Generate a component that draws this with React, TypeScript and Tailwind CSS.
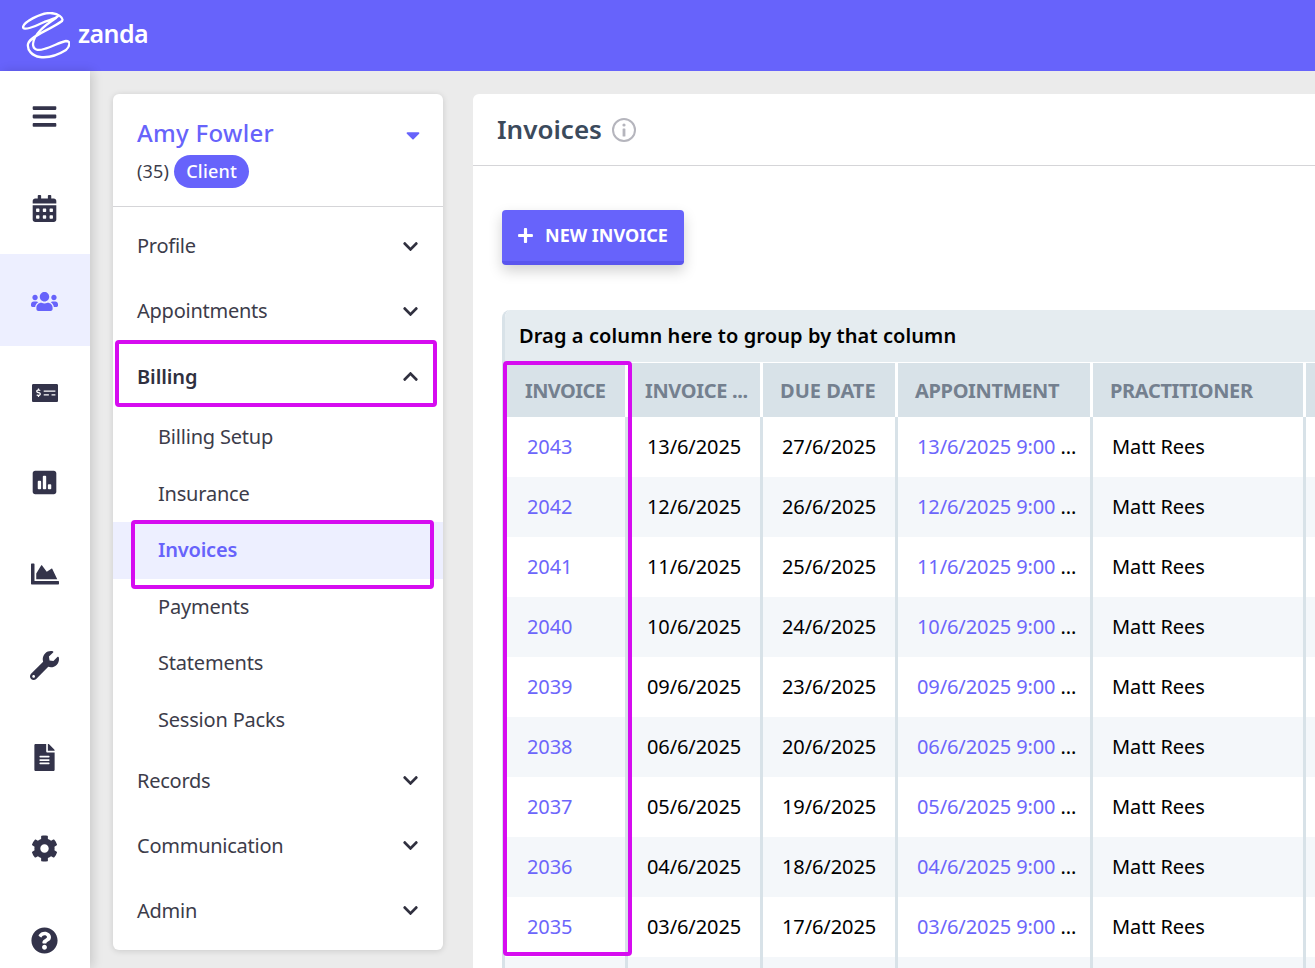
import React from 'react';
import {
  FaBars,
  FaCalendarAlt,
  FaCaretDown,
  FaChartArea,
  FaChevronDown,
  FaChevronUp,
  FaCog,
  FaFileAlt,
  FaMoneyCheckAlt,
  FaPlus,
  FaPoll,
  FaQuestionCircle,
  FaUsers,
  FaWrench,
} from 'react-icons/fa';

const railIcons = [
  { icon: FaBars, size: 27, shift: '' },
  { icon: FaCalendarAlt, size: 27, shift: '' },
  { icon: FaUsers, size: 27, shift: 'pt-[4px]', active: true },
  { icon: FaMoneyCheckAlt, size: 26, shift: 'pt-[4px]' },
  { icon: FaPoll, size: 27, shift: '' },
  { icon: FaChartArea, size: 28, shift: '' },
  { icon: FaWrench, size: 29, shift: '' },
  { icon: FaFileAlt, size: 27, shift: '' },
  { icon: FaCog, size: 27, shift: '' },
  { icon: FaQuestionCircle, size: 27, shift: '' },
];

const rows = [
  ['2043', '13/6/2025', '27/6/2025'],
  ['2042', '12/6/2025', '26/6/2025'],
  ['2041', '11/6/2025', '25/6/2025'],
  ['2040', '10/6/2025', '24/6/2025'],
  ['2039', '09/6/2025', '23/6/2025'],
  ['2038', '06/6/2025', '20/6/2025'],
  ['2037', '05/6/2025', '19/6/2025'],
  ['2036', '04/6/2025', '18/6/2025'],
  ['2035', '03/6/2025', '17/6/2025'],
];

const gridCols = 'grid grid-cols-[123px_135px_135px_195px_213px_1fr]';

const NavItem: React.FC<{ label: string }> = ({ label }) => (
  <div className="flex h-[65px] items-center justify-between pl-6 pr-[24px] text-[20px] tracking-[-0.25px] text-[#3c3c4a]">
    <span>{label}</span>
    <FaChevronDown size={17} className="text-[#30303f]" />
  </div>
);

const SubItem: React.FC<{ label: string; active?: boolean }> = ({ label, active }) => (
  <div
    className={`flex h-[56.5px] items-center pl-[45px] text-[20px] tracking-[-0.2px] ${
      active ? 'bg-[#edefff] font-semibold text-[#6763fb]' : 'text-[#3c3c4a]'
    }`}
  >
    {label}
  </div>
);

const HeadCell: React.FC<{ label: string; first?: boolean; tracking?: string }> = ({
  label,
  first,
  tracking = 'tracking-[-0.35px]',
}) => (
  <div
    className={`flex h-[54px] items-center border-r-[3px] border-white bg-[#d8e2e8] pt-[2px] text-[20px] font-bold text-[#74808f] ${tracking} ${
      first ? 'pl-5' : 'pl-[17px]'
    }`}
  >
    {label}
  </div>
);

const BodyCell: React.FC<{ children?: React.ReactNode; first?: boolean }> = ({ children, first }) => (
  <div
    className={`flex h-[60px] items-center whitespace-pre border-r-[3px] border-[#d8e2e8] text-[20px] tracking-[-0.1px] text-black ${
      first ? 'pl-[22px]' : 'pl-[19px]'
    }`}
  >
    {children}
  </div>
);

export default function App() {
  return (
    <div className="flex h-screen flex-col overflow-hidden bg-[#ebebeb] font-['Noto_Sans',sans-serif]">
      <header className="flex h-[71px] shrink-0 items-center bg-[#6763fb] pl-[22px]">
        <svg width="48" height="47" viewBox="22 12 48 47" fill="none" stroke="white" strokeWidth="2.3" strokeLinecap="round" strokeLinejoin="round">
          <path d="M56 18 C44 26 34 34 33 44 C33 50 38 51 44 49 C52 47 60 42 66 41 C71 41 70 46 66 50 C58 55 48 58 40 57 C32 56 27 50 28 44 C30 36 50 30 62 21 C64 18 58 13 50 13 C40 13 24 22 23 27 C23 31 34 27 42 23 C48 20 56 19 58 16" />
        </svg>
        <span className="mb-[3px] ml-2 font-['Inter',sans-serif] text-[25px] font-semibold tracking-[-0.6px] text-white">zanda</span>
      </header>

      <div className="flex min-h-0 flex-1">
        <nav className="z-10 w-[90px] shrink-0 bg-white shadow-[3px_0_10px_rgba(0,0,0,0.14)]">
          {railIcons.map(({ icon: Icon, size, shift, active }, i) => (
            <div
              key={i}
              className={`flex h-[91.5px] items-center justify-center pr-px ${shift} ${active ? 'bg-[#edefff] text-[#6763fb]' : 'text-[#33334a]'}`}
            >
              <Icon size={size} />
            </div>
          ))}
        </nav>

        <div className="flex min-w-0 flex-1 gap-[30px] pl-[23px] pt-[23px]">
          <aside className="relative h-[856px] w-[330px] shrink-0 rounded-md bg-white shadow-[0_1px_6px_rgba(0,0,0,0.14)]">
            <div className="h-[113px] border-b border-[#d5d5d8] px-6 pt-[21px]">
              <div className="flex items-center justify-between">
                <span className="text-[24px] font-medium leading-[36px] tracking-[0.3px] text-[#6763fb]">Amy Fowler</span>
                <FaCaretDown size={22} className="mr-[-5px] mt-[3px] text-[#6763fb]" />
              </div>
              <div className="mt-[4px] flex items-center gap-[5px] text-[18px] text-[#3c3c4a]">
                <span className="tracking-[0.2px]">(35)</span>
                <span className="flex h-[33px] items-center rounded-full bg-[#6763fb] px-3 font-medium tracking-[0.2px] text-white">Client</span>
              </div>
            </div>
            <div className="pt-[6.5px]">
              <NavItem label="Profile" />
              <NavItem label="Appointments" />
              <div className="flex h-[65.5px] items-center justify-between px-6 pt-px text-[20px] font-semibold tracking-[-0.1px] text-[#30303f]">
                <span>Billing</span>
                <FaChevronUp size={17} />
              </div>
              <SubItem label="Billing Setup" />
              <SubItem label="Insurance" />
              <SubItem label="Invoices" active />
              <SubItem label="Payments" />
              <SubItem label="Statements" />
              <SubItem label="Session Packs" />
              <NavItem label="Records" />
              <NavItem label="Communication" />
              <NavItem label="Admin" />
            </div>
            <div className="absolute left-[2px] top-[246px] h-[67px] w-[322px] rounded-sm border-4 border-[#d60cf0]" />
            <div className="absolute left-[18px] top-[426px] h-[69px] w-[303px] rounded-sm border-4 border-[#d60cf0]" />
          </aside>

          <main className="relative min-w-0 flex-1 overflow-hidden rounded-tl-md bg-white">
            <div className="flex h-[72px] items-center gap-[10px] border-b border-[#d5d5d8] pl-6">
              <h1 className="text-[26px] font-semibold text-[#3b4a5c]">Invoices</h1>
              <svg width="24" height="24" viewBox="0 0 24 24" fill="none" className="text-[#b5b5bd]">
                <circle cx="12" cy="12" r="11" stroke="currentColor" strokeWidth="2" />
                <circle cx="12" cy="7" r="1.6" fill="currentColor" />
                <rect x="10.6" y="10.5" width="2.8" height="8" rx="0.5" fill="currentColor" />
              </svg>
            </div>

            <div className="pl-[29px] pt-[44px]">
              <button className="flex h-[55px] w-[182px] items-center gap-[11px] rounded border-b-4 border-[#5a55ee] bg-[#6763fb] pl-[15px] text-[18px] font-bold text-white shadow-[0_6px_14px_rgba(0,0,0,0.18)]">
                <FaPlus size={17} />
                NEW INVOICE
              </button>

              <div className="mt-[45px] w-[900px] overflow-hidden rounded-tl-lg border-l-[3px] border-[#d8e2e8]">
                <div className="flex h-[52px] items-center bg-[#e5ecf0] pl-[14px] text-[20px] font-semibold tracking-[0.1px] text-black">
                  Drag a column here to group by that column
                </div>
                <div className={`${gridCols} mt-px`}>
                  <HeadCell label="INVOICE" first tracking="tracking-[-0.6px]" />
                  <HeadCell label="INVOICE ..." />
                  <HeadCell label="DUE DATE" tracking="tracking-normal" />
                  <HeadCell label="APPOINTMENT" />
                  <HeadCell label="PRACTITIONER" />
                  <HeadCell label="" />
                </div>
                {rows.map((row, i) => (
                  <div key={row[0]} className={`${gridCols} ${i % 2 === 1 ? 'bg-[#f4f7fa]' : 'bg-white'}`}>
                    <BodyCell first>
                      <span className="text-[#6c66fb]">{row[0]}</span>
                    </BodyCell>
                    <BodyCell>{row[1]}</BodyCell>
                    <BodyCell>{row[2]}</BodyCell>
                    <BodyCell>
                      <span className="text-[#6c66fb]">{row[1]} 9:00</span> ...
                    </BodyCell>
                    <BodyCell>Matt Rees</BodyCell>
                    <BodyCell />
                  </div>
                ))}
                <div className={`${gridCols} bg-[#f4f7fa]`}>
                  <BodyCell first />
                  <BodyCell />
                  <BodyCell />
                  <BodyCell />
                  <BodyCell />
                  <BodyCell />
                </div>
              </div>
            </div>
            <div className="absolute left-[30px] top-[267px] h-[595px] w-[129px] rounded-sm border-4 border-[#d60cf0]" />
          </main>
        </div>
      </div>
    </div>
  );
}
